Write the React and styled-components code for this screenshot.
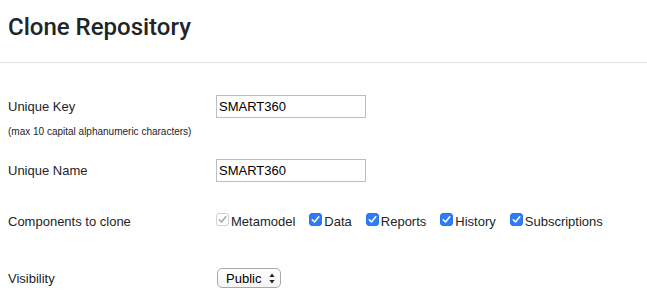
import React from "react";
import styled, { createGlobalStyle } from "styled-components";

const GlobalStyle = createGlobalStyle`
  body {
    margin: 0;
    background: #fff;
    font-family: "Liberation Sans", Arial, sans-serif;
    color: #212529;
  }
`;

const Header = styled.div`
  padding: 13px 8px 20px;
  border-bottom: 1px solid #dee2e6;
`;

const Title = styled.h1`
  margin: 0;
  font-family: Roboto, "Liberation Sans", sans-serif;
  font-size: 24px;
  font-weight: 500;
  line-height: 29px;
  color: #212529;
`;

const Form = styled.div`
  padding: 0 8px;
  display: flex;
  flex-direction: column;
`;

const Row = styled.div`
  display: grid;
  grid-template-columns: 208px 1fr;
  align-items: center;
  height: ${(p) => p.h}px;
  margin-top: ${(p) => p.top}px;
`;

const Label = styled.div`
  font-size: 13px;
  line-height: 15px;
`;

const Hint = styled.div`
  margin-top: 8px;
  font-size: 10px;
  line-height: 12px;
  color: #212529;
`;

const TextInput = styled.input`
  box-sizing: border-box;
  width: 150px;
  height: 23px;
  margin: 0;
  padding: 1px 2px;
  border: 1px solid #bdbdbd;
  border-radius: 0;
  font-family: "Liberation Sans", Arial, sans-serif;
  font-size: 13px;
  color: #000;
  outline: none;
`;

const Checks = styled.div`
  display: flex;
  align-items: center;
  gap: 14px;
`;

const CheckItem = styled.label`
  display: flex;
  align-items: center;
  gap: 2px;
  font-size: 13px;
  line-height: 15px;
  color: #212529;
`;

const Box = styled.span`
  box-sizing: border-box;
  width: 13px;
  height: 13px;
  margin-top: -4px;
  border-radius: 3px;
  display: flex;
  align-items: center;
  justify-content: center;
  background: ${(p) => (p.disabled ? "#fff" : "#2f7cf6")};
  border: 1px solid ${(p) => (p.disabled ? "#cfcfcf" : "#2a72e8")};
`;

const Select = styled.div`
  box-sizing: border-box;
  width: 64px;
  height: 20px;
  margin-left: 1px;
  padding: 0 5px 0 8px;
  display: flex;
  align-items: center;
  justify-content: space-between;
  border: 1px solid #a9a9a9;
  border-radius: 5px;
  background: linear-gradient(#fff, #f4f4f4);
  font-size: 13px;
  color: #000;
`;

function Check({ label, disabled }) {
  return (
    <CheckItem>
      <Box disabled={disabled}>
        <svg width="9" height="9" viewBox="0 0 9 9">
          <path
            d="M1.3 4.8 L3.5 7 L7.8 1.8"
            fill="none"
            stroke={disabled ? "#a6a6a6" : "#fff"}
            strokeWidth="1.6"
            strokeLinecap="round"
            strokeLinejoin="round"
          />
        </svg>
      </Box>
      {label}
    </CheckItem>
  );
}

export default function App() {
  return (
    <>
      <GlobalStyle />
      <Header>
        <Title>Clone Repository</Title>
      </Header>
      <Form>
        <Row h={23} top={32}>
          <Label>Unique Key</Label>
          <TextInput defaultValue="SMART360" readOnly />
        </Row>
        <Hint>(max 10 capital alphanumeric characters)</Hint>
        <Row h={23} top={21}>
          <Label>Unique Name</Label>
          <TextInput defaultValue="SMART360" readOnly />
        </Row>
        <Row h={24} top={27}>
          <Label>Components to clone</Label>
          <Checks>
            <Check label="Metamodel" disabled />
            <Check label="Data" />
            <Check label="Reports" />
            <Check label="History" />
            <Check label="Subscriptions" />
          </Checks>
        </Row>
        <Row h={20} top={35}>
          <Label>Visibility</Label>
          <Select>
            Public
            <svg width="6" height="11" viewBox="0 0 6 11">
              <path d="M3 0.5 L5.6 4 L0.4 4 Z" fill="#222" />
              <path d="M3 10.5 L5.6 7 L0.4 7 Z" fill="#222" />
            </svg>
          </Select>
        </Row>
      </Form>
    </>
  );
}
